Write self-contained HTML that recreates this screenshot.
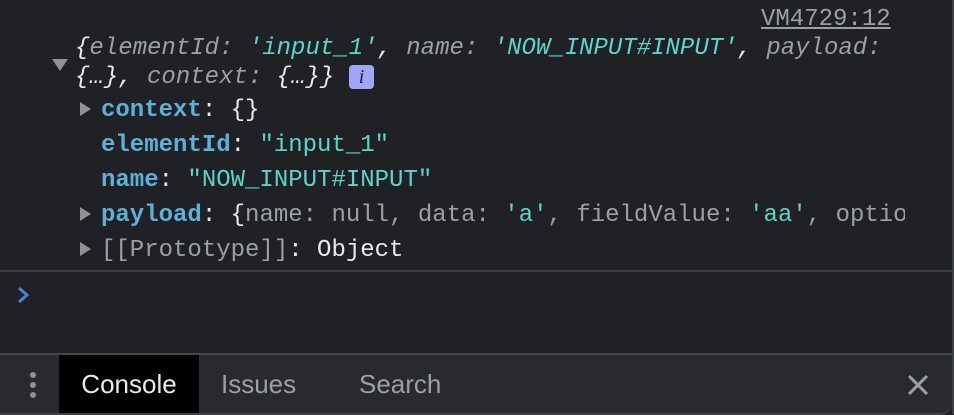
<!DOCTYPE html>
<html><head><meta charset="utf-8"><style>
html,body{margin:0;padding:0}
body{width:954px;height:414px;background:#202124;position:relative;overflow:hidden;font-family:"Liberation Mono",monospace;font-size:24px;color:#e8eaed}
.l{position:absolute;white-space:pre;line-height:30px}
.k{color:#5db0d7;font-weight:bold}
.s{color:#5cd5c9}
.g{color:#9aa0a6}
.i{font-style:italic}
.tri{position:absolute;width:0;height:0}
.tr{border-top:7px solid transparent;border-bottom:7px solid transparent;border-left:11px solid #8e9196}
.tabs{position:absolute;left:0;top:353px;width:952px;height:58px;background:#292a2d;border-top:2px solid #44474b;border-bottom:2px solid #3c3f43;border-bottom-right-radius:12px;font-family:"Liberation Sans",sans-serif}
.tab{position:absolute;top:0;height:58px;line-height:58px;font-size:26px;color:#9aa0a6}
</style></head><body>
<div style="position:absolute;right:0;top:0;width:2px;height:414px;background:#3c3f43"></div>
<div class="l g" style="left:761px;top:5px;text-decoration:underline">VM4729:12</div>
<div class="tri" style="left:52px;top:59px;border-left:8px solid transparent;border-right:8px solid transparent;border-top:12px solid #8e9196"></div>
<div class="l i" style="left:75px;top:34px">{<span class="g">elementId: </span><span class="s">'input_1'</span>, <span class="g">name: </span><span class="s">'NOW_INPUT#INPUT'</span>, <span class="g">payload:</span></div>
<div class="l i" style="left:75px;top:63px">{…}, <span class="g">context: </span>{…}}</div>
<div style="position:absolute;left:349px;top:65px;width:25px;height:24px;background:#a0a6f8;border-radius:4px;color:#202124;font-size:20px;line-height:24px;text-align:center;font-style:italic;font-family:'Liberation Serif',serif">i</div>
<div class="tri tr" style="left:80px;top:102px"></div>
<div class="l" style="left:101px;top:96px"><span class="k">context</span>: {}</div>
<div class="l" style="left:101px;top:131px"><span class="k">elementId</span>: <span class="s">"input_1"</span></div>
<div class="l" style="left:101px;top:166px"><span class="k">name</span>: <span class="s">"NOW_INPUT#INPUT"</span></div>
<div class="tri tr" style="left:80px;top:207px"></div>
<div class="l" style="left:101px;top:201px;width:804px;overflow:hidden"><span class="k">payload</span>: {<span class="g">name: </span><span class="g">null</span><span class="g">, data: </span><span class="s">'a'</span><span class="g">, fieldValue: </span><span class="s">'aa'</span><span class="g">, optio</span></div>
<div class="tri tr" style="left:80px;top:242px"></div>
<div class="l" style="left:101px;top:236px"><span class="g">[[Prototype]]</span>: Object</div>
<div style="position:absolute;left:0;top:270px;width:952px;height:2px;background:#3c3f43"></div>
<svg style="position:absolute;left:16px;top:286px" width="16" height="18"><path d="M3 2 L11 9 L3 16" stroke="#4c7fd6" stroke-width="3" fill="none"/></svg>
<div class="tabs">
<div style="position:absolute;left:30px;top:17px;width:6px;height:6px;border-radius:3px;background:#8e9196;box-shadow:0 10px 0 #8e9196,0 20px 0 #8e9196"></div>
<div class="tab" style="left:59px;width:140px;background:#000;color:#e8eaed;text-align:center">Console</div>
<div class="tab" style="left:221px">Issues</div>
<div class="tab" style="left:359px">Search</div>
<svg style="position:absolute;left:907px;top:19px" width="22" height="22"><path d="M2 2 L20 20 M20 2 L2 20" stroke="#9aa0a6" stroke-width="3"/></svg>
</div>
</body></html>
